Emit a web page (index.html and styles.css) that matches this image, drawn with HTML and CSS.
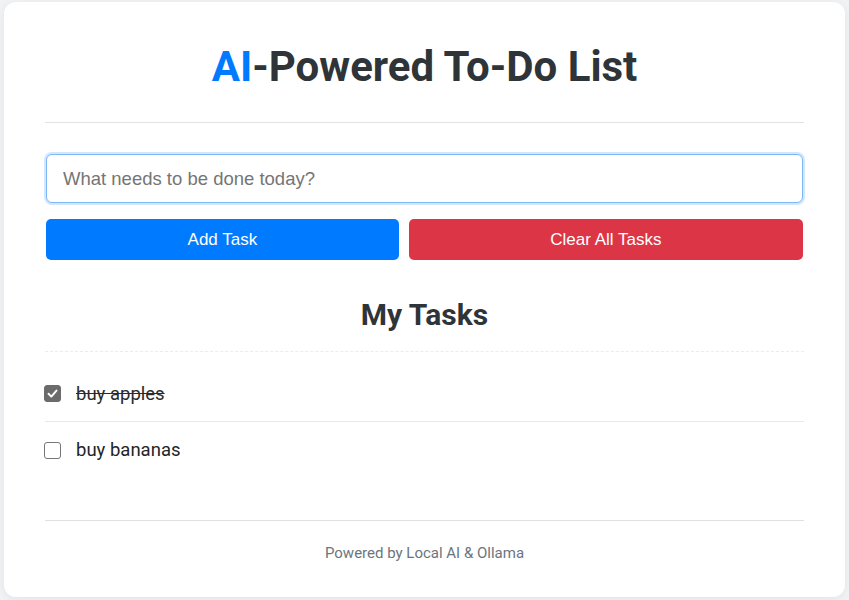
FILE: index.html
```html
<!DOCTYPE html>
<html lang="en">
<head>
<meta charset="utf-8">
<title>AI-Powered To-Do List</title>
<link rel="stylesheet" href="styles.css">
</head>
<body>
<main class="card">
  <h1 class="title"><span class="accent">AI</span>-Powered To-Do List</h1>
  <input class="task-input" type="text" placeholder="What needs to be done today?" autofocus>
  <div class="actions">
    <button class="btn btn-add">Add Task</button>
    <button class="btn btn-clear">Clear All Tasks</button>
  </div>
  <h2 class="subtitle">My Tasks</h2>
  <ul class="tasks">
    <li class="task done">
      <span class="check checked"><svg viewBox="0 0 17 17" width="17" height="17"><path d="M4 8.8 L7.2 12 L13 5.2" fill="none" stroke="#fff" stroke-width="2.2" stroke-linecap="round" stroke-linejoin="round"/></svg></span>
      <span class="task-text">buy apples</span>
    </li>
    <li class="task">
      <span class="check"></span>
      <span class="task-text">buy bananas</span>
    </li>
  </ul>
  <footer class="footer">Powered by Local AI &amp; Ollama</footer>
</main>
</body>
</html>
```

FILE: styles.css
```css
* { box-sizing: border-box; }
html, body { margin: 0; padding: 0; }
body {
  background: #f1f2f4;
  padding: 2px 4px 3px 4px;
  font-family: Roboto, "Liberation Sans", Arial, sans-serif;
  color: #343a40;
}
.card {
  background: #fff;
  border-radius: 12px;
  box-shadow: 0 2px 8px rgba(0,0,0,0.06);
  padding: 40px 41px 34px 41px;
  display: flex;
  flex-direction: column;
}
.title {
  margin: 0;
  font-size: 42px;
  line-height: 50px;
  font-weight: 700;
  text-align: center;
  color: #2f3439;
  padding-bottom: 30px;
  border-bottom: 1px solid #e3e3e3;
}
.accent { color: #007bff; }
.task-input {
  margin: 31px 1px 0 1px;
  height: 49px;
  border: 1px solid #7fb6f5;
  border-radius: 6px;
  box-shadow: 0 0 0 2px rgba(0,123,255,0.18);
  padding: 0 16px;
  font-family: "Liberation Sans", Arial, sans-serif;
  font-size: 18.5px;
  color: #333;
  outline: none;
}
.task-input::placeholder { color: #757575; }
.actions {
  display: flex;
  gap: 10px;
  margin: 16px 1px 0 1px;
}
.btn {
  flex: 1 1 auto;
  height: 41px;
  border: none;
  border-radius: 5px;
  color: #fff;
  font-family: "Liberation Sans", Arial, sans-serif;
  font-size: 17px;
  padding: 0 10px;
}
.btn-add { background: #007bff; }
.btn-clear { background: #dc3545; }
.subtitle {
  margin: 36px 0 0 0;
  font-size: 30px;
  line-height: 38px;
  font-weight: 700;
  text-align: center;
  color: #2f3439;
  padding-bottom: 17px;
  border-bottom: 1px dashed #ececec;
}
.tasks {
  list-style: none;
  margin: 14px 0 0 0;
  padding: 0;
}
.task {
  display: flex;
  align-items: center;
  gap: 15px;
  height: 56px;
  border-bottom: 1px solid #e8e8e8;
  font-size: 18.5px;
  color: #212529;
}
.task:last-child { border-bottom: none; }
.check {
  width: 17px;
  height: 17px;
  margin-left: -1px;
  border: 1.5px solid #767676;
  border-radius: 3px;
  background: #fff;
  display: flex;
  align-items: center;
  justify-content: center;
}
.check.checked {
  background: #6b6b6b;
  border-color: #6b6b6b;
}
.check svg { display: block; }
.done .task-text {
  text-decoration: line-through;
  color: #2b2b2b;
}
.footer {
  margin-top: 42px;
  border-top: 1px solid #e0e0e0;
  padding-top: 22px;
  text-align: center;
  font-size: 15px;
  line-height: 20px;
  color: #6c757d;
}
```
